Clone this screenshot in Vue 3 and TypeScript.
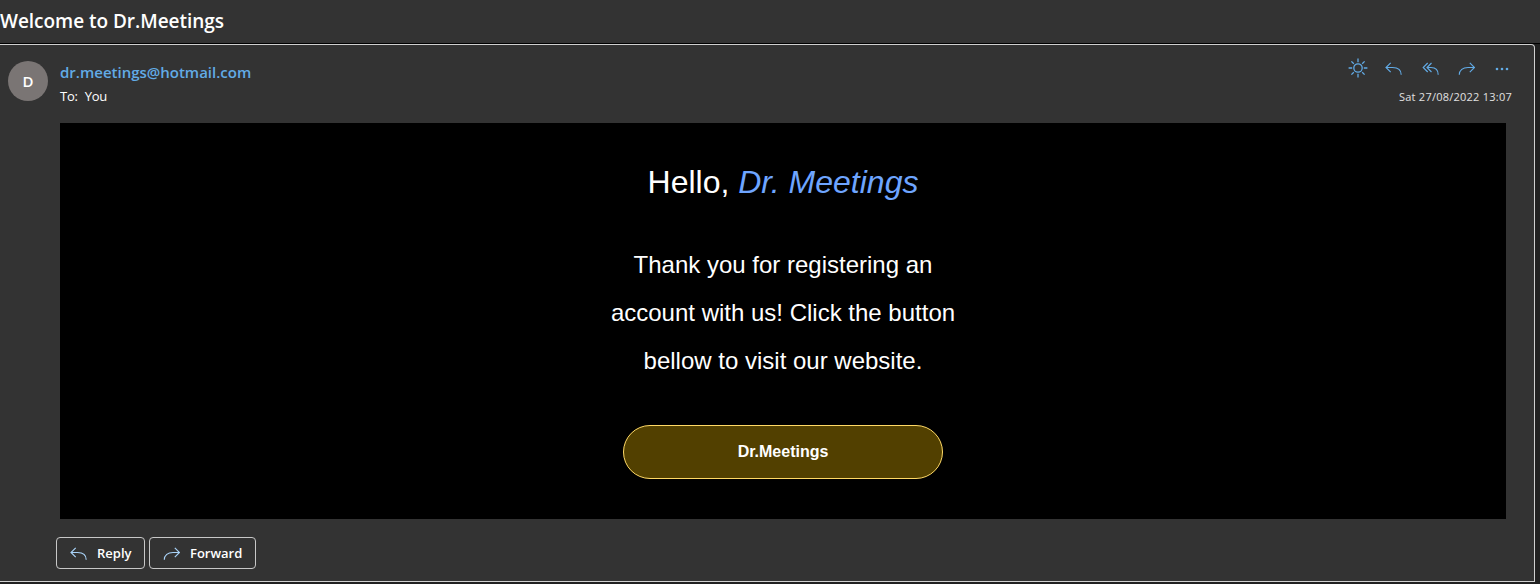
<script setup lang="ts">
interface Action {
  name: string
  paths: string[]
}

const replyPaths = ['M5.700 2.800 1 7.500l4.700 4.700', 'M1.200 7.500H7.500C12.600 7.500 16.200 10 16.200 14.800']
const forwardPaths = ['M11.800 2.800 16.500 7.500l-4.700 4.700', 'M16.300 7.500H10C4.900 7.500 1.300 10 1.300 14.800']

const actions: Action[] = [
  { name: 'Reply', paths: replyPaths },
  { name: 'Reply all', paths: ['M5.700 3 1.200 7.500l4.500 4.500', 'M9.500 3 5 7.500l4.500 4.500', 'M5.200 7.500H9C13.200 7.500 16.200 10 16.200 14.800'] },
  { name: 'Forward', paths: forwardPaths },
]
const responses: Action[] = [actions[0], actions[2]]
const lines: string[] = ['Thank you for registering an', 'account with us! Click the button', 'bellow to visit our website.']
</script>

<template>
  <main class="mail">
    <header class="subject"><span>Welcome to Dr.Meetings</span></header>
    <article class="card">
      <div class="head">
        <div class="avatar">D</div>
        <div class="people">
          <div class="sender"><span>dr.meetings@hotmail.com</span></div>
          <div class="to"><span>To:</span><span>You</span></div>
        </div>
        <div class="meta">
          <div class="actions">
            <button class="icon-btn" aria-label="Light mode">
              <svg class="sun" width="20" height="20" viewBox="0 0 20 20">
                <circle cx="10" cy="10" r="4.2" />
                <path d="M10 .6v3.6M10 15.8v3.6M.6 10h3.6M15.8 10h3.6M3.4 3.4l2.4 2.4M14.2 14.2l2.4 2.4M3.4 16.6l2.4-2.4M14.2 5.8l2.4-2.4" />
              </svg>
            </button>
            <button v-for="a in actions" :key="a.name" class="icon-btn" :aria-label="a.name">
              <svg width="17" height="17" viewBox="0 0 17 17"><path v-for="p in a.paths" :key="p" :d="p" /></svg>
            </button>
            <button class="icon-btn" aria-label="More">
              <svg class="dots" width="14" height="4" viewBox="0 0 14 4">
                <circle cx="2" cy="2" r="1.3" /><circle cx="7" cy="2" r="1.3" /><circle cx="12" cy="2" r="1.3" />
              </svg>
            </button>
          </div>
          <time class="date">Sat 27/08/2022 13:07</time>
        </div>
      </div>
      <section class="body">
        <h1>Hello, <em>Dr. Meetings</em></h1>
        <p><span v-for="l in lines" :key="l">{{ l }}</span></p>
        <a class="cta">Dr.Meetings</a>
      </section>
      <footer class="foot">
        <button v-for="r in responses" :key="r.name" class="respond" :class="r.name.toLowerCase()">
          <svg width="17" height="17" viewBox="0 0 17 17"><path v-for="p in r.paths" :key="p" :d="p" /></svg>
          <span>{{ r.name }}</span>
        </button>
      </footer>
    </article>
  </main>
</template>

<style>
body { margin: 0; background: #212121; overflow: hidden; }
</style>

<style scoped>
* { box-sizing: border-box; }
.mail { width: 1540px; height: 584px; overflow: hidden; background: #212121; color: #fff; font-family: "Segoe UI", "Open Sans", "Noto Sans", sans-serif; }
.subject { height: 44px; background: #333; border-bottom: 1px solid #000; font-size: 19px; font-weight: 600; letter-spacing: -.03px; line-height: 42px; white-space: nowrap; }
.card { width: 1535px; height: 538px; background: #333; border: 1px solid #d0d0d0; border-left: 0; border-radius: 0 4px 0 0; }
.head { display: flex; height: 78px; padding: 16px 22px 0 8px; }
.avatar { width: 40px; height: 40px; border-radius: 50%; background: #7a7574; text-align: center; font-size: 15px; font-weight: 600; line-height: 40px; }
.people { margin-left: 12px; white-space: nowrap; }
.sender { height: 24px; color: #62abe6; font-size: 15px; font-weight: 600; line-height: 23px; }
.to { display: flex; gap: 7px; font-size: 13px; letter-spacing: -.25px; line-height: 22px; }
.meta { margin-left: auto; }
.actions { display: flex; justify-content: flex-end; margin-right: -8.5px; margin-top: -11px; margin-bottom: 1px; }
button { font-family: inherit; color: inherit; background: none; padding: 0; }
.icon-btn { display: flex; align-items: center; justify-content: center; width: 36.2px; height: 36px; border: 0; }
svg { display: block; fill: none; stroke: #62abe6; stroke-width: 1.15; }
.sun { stroke-width: 1.3; }
.dots { margin-top: 2px; fill: #62abe6; stroke: none; }
.date { display: block; text-align: right; font-size: 11px; letter-spacing: .24px; line-height: 20px; color: #e1e1e1; white-space: nowrap; }
.body { display: flex; flex-direction: column; align-items: center; width: 1446px; height: 396px; margin-left: 60px; background: #000; font-family: "Liberation Sans", Arial, sans-serif; }
h1 { margin: 40px 0 0; font-size: 32px; font-weight: 400; line-height: 38px; }
em { color: #6ea5ff; }
p { margin: 40px 0 0; text-align: center; font-size: 24px; line-height: 48px; }
p span { display: block; }
.cta { width: 320px; height: 54px; margin-top: 40px; border: 1px solid #ffd966; border-radius: 27px; background: #524000; text-align: center; font-size: 16px; font-weight: 700; line-height: 51px; }
.foot { display: flex; gap: 4px; padding: 18px 0 0 56px; }
.respond { display: flex; align-items: center; height: 32px; padding-left: 13px; border: 1px solid #c8c8c8; border-radius: 4px; font-size: 13px; font-weight: 600; }
.respond svg { margin-right: 10px; stroke: #a9d3f8; }
.reply { width: 89px; }
.forward { width: 107px; }
</style>
